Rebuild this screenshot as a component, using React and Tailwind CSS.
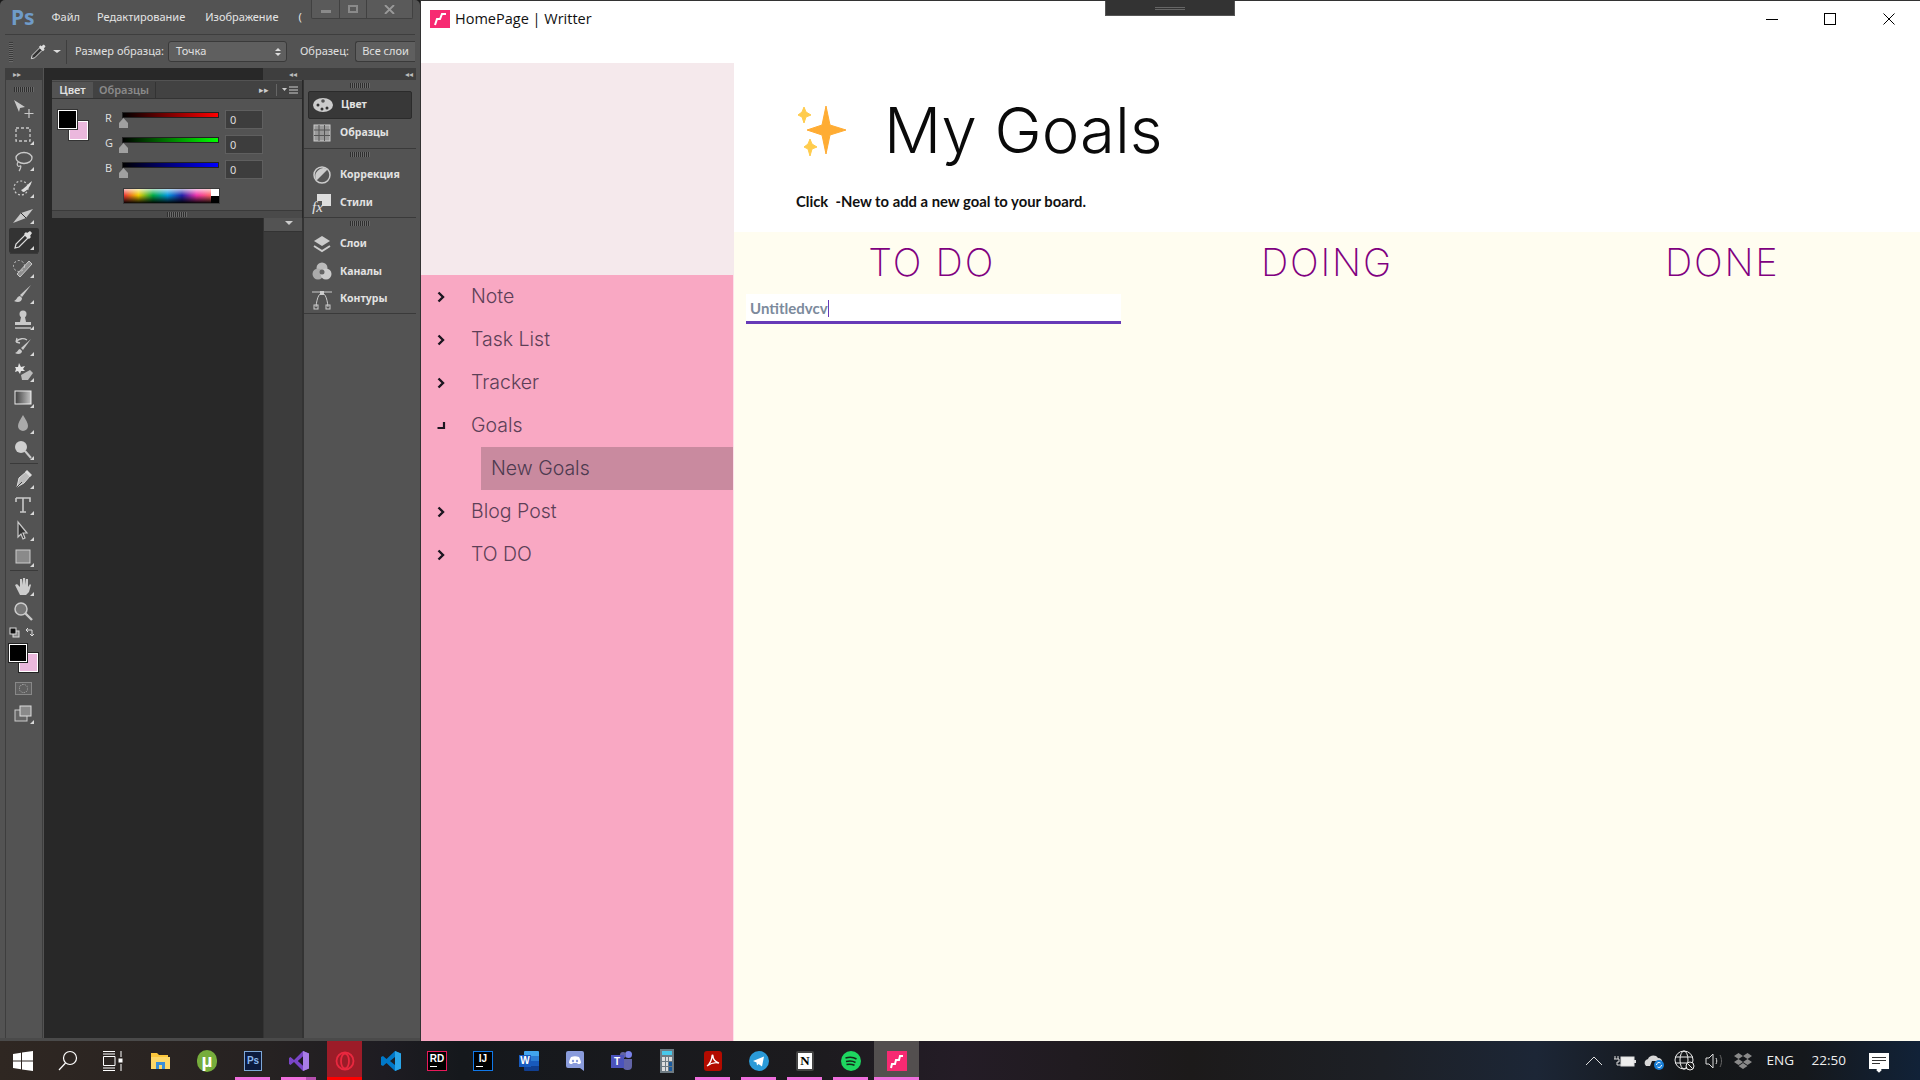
import React from "react";

const G = "#c9c9c9";

function Grip({ w = "w-[20px]" }) {
  return <div className={`${w} h-[5px] bg-[repeating-linear-gradient(to_right,#2e2e2e_0_1px,#6a6a6a_1px_2px)]`} />;
}

function Corner() {
  return <span className="absolute right-[8px] bottom-[3px] w-0 h-0 border-l-[4px] border-l-transparent border-b-[4px] border-b-[#d8d8d8]" />;
}

function Tool({ h = "h-[26px]", corner = true, children, active }) {
  return (
    <div className={`relative ${h} w-full flex items-center justify-center pr-[2px]`}>
      {active && <div className="absolute left-[3px] right-[3px] top-[1px] bottom-0 bg-[#333] rounded-[2px]" />}
      <svg width="24" height="24" viewBox="0 0 24 24" fill="none" className="relative">{children}</svg>
      {corner && <Corner />}
    </div>
  );
}

const Eyedrop = () => (
  <>
    <path d="M4 20l1-4 9-9 3 3-9 9z" fill="#333" stroke="#ddd" strokeWidth="1.2" />
    <path d="M13 6l2-2 1 1 3-2 2 2-2 3 1 1-2 2z" fill="#ddd" />
  </>
);

function Toolbar() {
  return (
    <div className="w-[38px] ml-[5px] shrink-0 bg-[#535353] border-x border-[#3e3e3e] flex flex-col">
      <div className="h-[12px] bg-[#3e3e3e] flex items-center pl-[7px] text-[8px] leading-none text-[#bbb]">▸▸</div>
      <div className="h-[14px] flex items-center justify-center pt-[4px]"><Grip /></div>
      <div className="h-[1px]" />
      <Tool h="h-[26.4px]" corner={false}>
        <path d="M3 4l11 7-5 1-1 4z" fill={G} /><path d="M18 13v9M13.5 17.5h9" stroke={G} strokeWidth="1.2" />
      </Tool>
      <Tool h="h-[26.4px]"><rect x="5" y="5" width="14" height="13" stroke={G} strokeWidth="1.3" strokeDasharray="3 2" /></Tool>
      <Tool h="h-[26.4px]">
        <ellipse cx="13" cy="9" rx="8" ry="5.5" stroke={G} strokeWidth="1.3" /><path d="M7 13c-2 3 0 5 2 4s0 4-1 5" stroke={G} strokeWidth="1.2" />
      </Tool>
      <Tool h="h-[26.4px]">
        <circle cx="10" cy="13" r="7" stroke={G} strokeWidth="1.2" strokeDasharray="2 2" /><path d="M10 15c3-1 8-7 11-9-1 4-5 11-9 11z" fill="#ddd" />
      </Tool>
      <Tool h="h-[26.4px]"><path d="M2 21l8-10 12-4-7 9z" fill={G} /><path d="M10 11l5 5" stroke="#333" /></Tool>
      <Tool h="h-[26.4px]" active><Eyedrop /></Tool>
      <div className="h-[2px] mx-[4px] border-t border-[#3a3a3a]" />
      <Tool>
        <path d="M6 18L18 5l3 3L9 21z" fill="#8f8f8f" stroke={G} /><circle cx="8" cy="10" r="5.5" stroke={G} strokeDasharray="2 2" />
      </Tool>
      <Tool><path d="M20 3L11 15l-2-2z" fill={G} /><path d="M9 14c-3 0-3 4-6 5 4 2 8 1 8-3z" fill={G} /></Tool>
      <Tool>
        <circle cx="12" cy="6" r="3.5" fill={G} /><path d="M10 9h4l1 5H9z" fill={G} /><rect x="4" y="14" width="16" height="3" fill={G} /><path d="M4 20h16" stroke={G} strokeWidth="1.4" />
      </Tool>
      <Tool>
        <path d="M5 8c3-4 8-4 11-2M5 8l1-4M5 8l4 1" stroke={G} strokeWidth="1.3" /><path d="M20 5L12 16l-2-2z" fill={G} /><path d="M9 15c-2 0-2 3-5 4 3 2 7 1 7-2z" fill={G} />
      </Tool>
      <Tool>
        <path d="M4 7l3 0 1-4 2 4 4-1-2 3 2 2-4 0-1 3-2-3-3 1 1-3z" fill="#e4e4e4" /><path d="M10 15l9-5 3 3-5 7h-6z" fill="#bbb" />
      </Tool>
      <Tool>
        <defs><linearGradient id="gradtool"><stop offset="0" stopColor="#3e3e3e" /><stop offset="1" stopColor="#c4c4c4" /></linearGradient></defs>
        <rect x="4" y="5" width="16" height="13" fill="url(#gradtool)" stroke="#eee" strokeWidth="1" />
      </Tool>
      <Tool><path d="M12 3c3 5 5 8 5 11a5 5 0 01-10 0c0-3 2-6 5-11z" fill="#aaa" /></Tool>
      <Tool><circle cx="10" cy="9" r="6" fill="#cfcfcf" /><path d="M14 13l6 7" stroke={G} strokeWidth="2" /></Tool>
      <div className="h-[3px] mx-[4px] border-t border-[#3a3a3a]" />
      <Tool>
        <path d="M6 20l2-9 7-6 4 4-6 7z" fill="#bbb" stroke="#ddd" /><path d="M14 5l2-2 5 5-2 2z" fill="#ddd" /><path d="M6 20l5-5" stroke="#444" />
      </Tool>
      <Tool><path d="M5 5h14v4M5 5v4M12 5v14M9 19h6" stroke={G} strokeWidth="1.6" /></Tool>
      <Tool><path d="M7 3v15l3-3 2 5 2-1-2-5h4z" fill="#333" stroke={G} strokeWidth="1.2" /></Tool>
      <Tool><rect x="5" y="5" width="14" height="13" fill="#8a8a8a" stroke="#ccc" /></Tool>
      <div className="h-[3px] mx-[4px] border-t border-[#3a3a3a]" />
      <Tool>
        <path d="M7 17L4 11l2-1 3 3V5l2 0 1 6V4h2l1 7V5h2v8l2-3 1 1-2 7-3 3h-6z" fill="#ccc" />
      </Tool>
      <Tool corner={false}><circle cx="10" cy="9" r="6" fill="#777" stroke="#ccc" strokeWidth="1.5" /><path d="M14 13l7 7" stroke={G} strokeWidth="2.4" /></Tool>
      <div className="h-[15px] flex items-center justify-between pl-[3px] pr-[6px]">
        <svg width="11" height="11" viewBox="0 0 11 11"><rect x="4" y="4" width="6" height="6" fill="#888" stroke="#ddd" /><rect x="1" y="1" width="6" height="6" fill="#111" stroke="#ddd" /></svg>
        <svg width="11" height="11" viewBox="0 0 11 11" fill="none"><path d="M1 3h6v6M1 3l2-2M1 3l2 2M7 9l-2-2M7 9l2-2" stroke="#ddd" /></svg>
      </div>
      <div className="relative h-[32px] mt-[4px]">
        <div className="absolute left-[13px] top-[9px] w-[19px] h-[19px] bg-[#ebb8dd] border border-white outline outline-[#222]" />
        <div className="absolute left-[3px] top-0 w-[18px] h-[18px] bg-black border border-white outline outline-[#222]" />
      </div>
      <div className="h-[26px] mt-[-1px] flex items-center justify-center pr-[2px]">
        <div className="w-[17px] h-[13px] border border-[#888] bg-[#5f5f5f] flex items-center justify-center">
          <div className="w-[9px] h-[9px] rounded-full border border-dotted border-[#aaa]" />
        </div>
      </div>
      <Tool>
        <rect x="4" y="8" width="12" height="11" fill="#666" stroke="#ccc" /><rect x="9" y="4" width="11" height="10" fill="#8a8a8a" stroke="#ddd" />
      </Tool>
    </div>
  );
}

function Slider({ label, grad }) {
  return (
    <div className="h-[25px] flex items-start">
      <div className="w-[15px] ml-[53px] text-[11px] leading-none pt-[2px] text-[#ddd]">{label}</div>
      <div className="relative w-[97px] ml-[2px]">
        <div className={`h-[6px] mt-[2px] border border-[#222] ${grad}`} />
        <svg width="11" height="10" viewBox="0 0 11 10" className="absolute left-[-4px] top-[8px]"><path d="M5.5 0L10 5v5H1V5z" fill="#a0a0a0" /></svg>
      </div>
      <div className="w-[38px] h-[19px] ml-[6px] bg-[#3d3d3d] border border-[#5f5f5f] pl-[4px] text-[11px] leading-[18px] text-[#ddd]">0</div>
    </div>
  );
}

function ColorPanel() {
  return (
    <div className="h-[138px] w-[250px] ml-[8px] bg-[#535353] flex flex-col shrink-0">
      <div className="h-[18px] flex items-stretch bg-[#424242] border-b border-[#333] text-[11px] mt-[1px] pt-[1px]">
        <div className="w-[41px] bg-[#535353] text-[#e0e0e0] font-semibold flex items-center justify-center">Цвет</div>
        <div className="w-[63px] border-r border-[#333] text-[#8a8a8a] font-semibold flex items-center justify-center">Образцы</div>
        <div className="flex-1" />
        <div className="flex items-center text-[9px] text-[#ccc] pr-[7px]">▸▸</div>
        <div className="w-px my-[2px] bg-[#666]" />
        <div className="flex items-center pl-[5px] pr-[4px]">
          <svg width="16" height="8" viewBox="0 0 16 8"><path d="M0 2h5L2.5 5z" fill="#ccc" /><path d="M7 1h9M7 4h9M7 7h9" stroke="#ccc" /></svg>
        </div>
      </div>
      <div className="relative flex-1 pt-[11px]">
        <div className="absolute left-[17px] top-[22px] w-[19px] h-[19px] bg-[#ebb8dd] border border-white outline outline-[#333]" />
        <div className="absolute left-[6px] top-[11px] w-[19px] h-[19px] bg-black border border-white outline outline-[#333]" />
        <Slider label="R" grad="bg-[linear-gradient(to_right,#000,#f00)]" />
        <Slider label="G" grad="bg-[linear-gradient(to_right,#000,#0f0)]" />
        <Slider label="B" grad="bg-[linear-gradient(to_right,#000,#00f)]" />
        <div className="ml-[71px] w-[97px] h-[16px] mt-[3px] flex border border-[#3a3a3a]">
          <div className="flex-1 bg-[linear-gradient(to_bottom,rgba(255,255,255,.7),rgba(255,255,255,0)_45%,rgba(0,0,0,.95)),linear-gradient(to_right,#e33,#ec0,#0a4,#09d,#22a,#e3a,#f66)]" />
          <div className="w-[8px] flex flex-col"><div className="flex-1 bg-white" /><div className="flex-1 bg-black" /></div>
        </div>
      </div>
      <div className="h-[8px] bg-[#4a4a4a] border-t border-[#3a3a3a] flex items-center justify-center"><Grip /></div>
    </div>
  );
}

function DockItem({ label, active, children }) {
  return (
    <div className={`h-[28px] mx-[4px] flex items-center gap-[7px] pl-[3px] rounded-[2px] ${active ? "bg-[#383838] border border-[#2b2b2b]" : ""}`}>
      <svg width="22" height="22" viewBox="0 0 22 22" fill="none" className="shrink-0">{children}</svg>
      <span className="text-[10.500px] font-bold text-[#e2e2e2]">{label}</span>
    </div>
  );
}

function Dock() {
  return (
    <div className="w-[113px] shrink-0 flex flex-col">
      <div className="h-[12px] bg-[#3e3e3e] flex items-center justify-end pr-[3px] text-[8px] leading-none text-[#bbb]">◂◂</div>
      <div className="flex-1 bg-[#535353] border-l border-[#333] flex flex-col">
        <div className="h-[69px] border-b border-[#3a3a3a] flex flex-col">
          <div className="h-[11px] flex items-center justify-center"><Grip /></div>
          <DockItem label="Цвет" active>
            <ellipse cx="11" cy="11" rx="10" ry="7" fill="#ccc" /><circle cx="6" cy="11" r="1.5" fill="#333" /><circle cx="10" cy="15" r="1.5" fill="#333" /><circle cx="15" cy="14" r="1.5" fill="#333" /><circle cx="11" cy="7" r="1.8" fill="#555" />
          </DockItem>
          <DockItem label="Образцы">
            <rect x="3" y="3" width="16" height="16" fill="#999" stroke="#ccc" /><path d="M8 3v16M13.500 3v16M3 8h16M3 13.500h16" stroke="#555" />
          </DockItem>
        </div>
        <div className="h-[69px] border-b border-[#3a3a3a] flex flex-col">
          <div className="h-[11px] flex items-center justify-center"><Grip /></div>
          <div className="h-[1px]" />
          <DockItem label="Коррекция">
            <circle cx="11" cy="11" r="8" fill="#555" stroke="#ccc" strokeWidth="1.5" /><path d="M5.500 16.500L16.500 5.500A8 8 0 005.500 16.500z" fill="#ccc" />
          </DockItem>
          <DockItem label="Стили">
            <rect x="6" y="2" width="14" height="12" fill="#ddd" /><rect x="0" y="9" width="11" height="13" fill="#535353" /><text x="1" y="20" fontSize="15" fontStyle="italic" fontFamily="Liberation Serif" fill="#e4e4e4">fx</text>
          </DockItem>
        </div>
        <div className="h-[96px] border-b border-[#3a3a3a] flex flex-col">
          <div className="h-[11px] flex items-center justify-center"><Grip /></div>
          <div className="h-[1px]" />
          <DockItem label="Слои">
            <path d="M11 3l8 5-8 5-8-5z" fill="#ccc" /><path d="M3 13l8 5 8-5" stroke="#ccc" strokeWidth="2" />
          </DockItem>
          <DockItem label="Каналы">
            <circle cx="11" cy="8" r="5.500" fill="#bbb" /><circle cx="7" cy="14" r="5.500" fill="#aaa" /><circle cx="15" cy="14" r="5.500" fill="#ccc" /><circle cx="11" cy="12" r="2.500" fill="#666" />
          </DockItem>
          <DockItem label="Контуры">
            <path d="M5 19C6 8 9 5 11 5s5 3 6 14M1 4h20" stroke="#ccc" /><rect x="3" y="17" width="4" height="4" stroke="#ccc" /><rect x="15" y="17" width="4" height="4" stroke="#ccc" /><rect x="9" y="3" width="4" height="4" fill="#ccc" />
          </DockItem>
        </div>
      </div>
    </div>
  );
}

function Photoshop() {
  return (
    <div className="w-[420px] h-full shrink-0 bg-[#535353] flex flex-col font-['Noto_Sans','Open_Sans',sans-serif] rounded-t-[5px]">
      <div className="h-[34px] flex items-center shrink-0 relative text-[11px] text-[#e4e4e4]">
        <span className="ml-[11px] mr-[17px] text-[21px] font-bold text-[#6f9bc8] leading-none">Ps</span>
        <span className="mr-[17px]">Файл</span>
        <span className="mr-[20px]">Редактирование</span>
        <span className="mr-[20px]">Изображение</span>
        <span>(</span>
        <div className="absolute left-[311px] top-0 h-[19px] w-[102px] flex border border-t-0 border-[#414141] rounded-b-[2px] bg-[#5a5a5a]">
          <div className="w-[28px] flex items-center justify-center border-r border-[#414141]"><div className="w-[10px] h-[3px] mt-[5px] bg-[#8a8a8a]" /></div>
          <div className="w-[27px] flex items-center justify-center border-r border-[#414141]"><div className="w-[10px] h-[8px] border-2 border-[#8a8a8a]" /></div>
          <div className="flex-1 flex items-center justify-center">
            <svg width="11" height="9" viewBox="0 0 11 9"><path d="M1 0l9 9M10 0L1 9" stroke="#9a9a9a" strokeWidth="1.8" /></svg>
          </div>
        </div>
      </div>
      <div className="h-[34px] mx-[5px] mr-[5px] shrink-0 border-t border-[#3e3e3e] flex items-center text-[11px] text-[#e0e0e0]">
        <div className="w-[4px] ml-[4px] h-[20px] bg-[repeating-linear-gradient(to_bottom,#3a3a3a_0_1px,#6a6a6a_1px_2px)]" />
        <svg width="20" height="20" viewBox="0 0 24 24" fill="none" className="ml-[15px]"><Eyedrop /></svg>
        <span className="ml-[5px] w-0 h-0 border-x-[4px] border-x-transparent border-t-[3px] border-t-[#ddd]" />
        <div className="ml-[5px] h-[24px] w-px bg-[#3e3e3e]" />
        <span className="ml-[8px] w-[85px] whitespace-nowrap">Размер образца:</span>
        <div className="ml-[8px] w-[119px] h-[21px] bg-[#5f5f5f] border border-[#3a3a3a] rounded-[3px] flex items-center justify-between pl-[7px] pr-[5px]">
          <span>Точка</span>
          <span className="flex flex-col gap-[2px]">
            <span className="w-0 h-0 border-x-[3px] border-x-transparent border-b-[3px] border-b-[#ddd]" />
            <span className="w-0 h-0 border-x-[3px] border-x-transparent border-t-[3px] border-t-[#ddd]" />
          </span>
        </div>
        <span className="ml-[13px] w-[47px] whitespace-nowrap">Образец:</span>
        <div className="ml-[8px] w-[60px] h-[21px] bg-[#5f5f5f] border border-[#3a3a3a] border-r-0 rounded-l-[3px] flex items-center justify-center whitespace-nowrap">Все слои</div>
      </div>
      <div className="flex-1 flex min-h-0 border-b-[3px] border-[#4a4a4a]">
        <Toolbar />
        <div className="w-[259px] ml-[1px] shrink-0 bg-[#282828] flex flex-col">
          <div className="h-[12px] shrink-0 flex bg-[#282828]">
            <div className="flex-1" />
            <div className="w-[40px] bg-[#3e3e3e] flex items-center justify-end pr-[6px] text-[8px] leading-none text-[#bbb]">◂◂</div>
          </div>
          <ColorPanel />
          <div className="flex-1 flex">
            <div className="flex-1" />
            <div className="w-[40px] bg-[#3c3c3c] border-x border-[#333]">
              <div className="h-[14px] bg-[#535353] border-b border-[#333] flex justify-end pr-[9px] pt-[3px]">
                <span className="w-0 h-0 border-x-[4px] border-x-transparent border-t-[4px] border-t-[#ccc]" />
              </div>
            </div>
          </div>
        </div>
        <Dock />
      </div>
    </div>
  );
}

const Chev = () => (
  <svg width="10" height="12" viewBox="0 0 10 12" fill="none"><path d="M2.500 1.500L7 6l-4.500 4.500" stroke="#1c1620" strokeWidth="2.400" /></svg>
);
const Open = () => (
  <svg width="10" height="12" viewBox="0 0 10 12" fill="none"><path d="M8 2v6H1.500" stroke="#1c1620" strokeWidth="2.200" /></svg>
);

function NavItem({ label, open }) {
  return (
    <div className="h-[43px] flex items-center">
      <div className="w-[50px] pl-[15px] flex items-center">{open ? <Open /> : <Chev />}</div>
      <span className="pt-[1px]">{label}</span>
    </div>
  );
}

function Sidebar() {
  return (
    <div className="w-[313px] shrink-0 flex flex-col font-['Inter',sans-serif] font-light text-[19.500px] text-[#5d3f57]">
      <div className="h-[212px] shrink-0 bg-[#f5e9ec]" />
      <div className="flex-1 bg-[#f9a8c3] border-r border-[#fde0ea]">
        <NavItem label="Note" />
        <NavItem label="Task List" />
        <NavItem label="Tracker" />
        <NavItem label="Goals" open />
        <div className="h-[43px] ml-[60px] bg-[#c98a9f] flex items-center pl-[10px] pt-[1px] text-[#4d3a50]">New Goals</div>
        <NavItem label="Blog Post" />
        <NavItem label="TO DO" />
      </div>
    </div>
  );
}

function Sparkles() {
  return (
    <svg width="56" height="56" viewBox="0 0 56 56" className="shrink-0">
      <path d="M31 4L35 23L51 28L35 33L31 52L27 33L12 28L27 23z" fill="#ffac33" stroke="#ffac33" strokeLinejoin="round" />
      <path d="M9 5L11 10L16 13L11 15L9 21L7 15L3 13L7 10z" fill="#ffcc4d" stroke="#ffcc4d" strokeLinejoin="round" />
      <path d="M15 37L17 42L22 45L17 47L15 54L13 47L9 45L13 42z" fill="#ffcc4d" stroke="#ffcc4d" strokeLinejoin="round" />
    </svg>
  );
}

function Column({ title, children }) {
  return (
    <div className="flex flex-col">
      <div className="h-[62px] pb-[2px] flex items-center justify-center font-['Inter',sans-serif] font-extralight text-[38px] tracking-[1.800px] text-[#800080]">{title}</div>
      {children}
    </div>
  );
}

function Main() {
  return (
    <div className="flex-1 flex flex-col min-w-0">
      <div className="h-[169px] shrink-0 bg-white pl-[61px] flex flex-col">
        <div className="flex items-center h-[110px] mt-[12px]">
          <Sparkles />
          <h1 className="ml-[33px] font-['Inter',sans-serif] font-light text-[63.500px] leading-none text-[#0a0a0a]">My Goals</h1>
        </div>
        <p className="mt-[5px] ml-[1px] font-['Lato',sans-serif] font-bold text-[14.800px] text-[#111]">Click&nbsp; -New to add a new goal to your board.</p>
      </div>
      <div className="flex-1 bg-[#fffdf0] grid grid-cols-3">
        <Column title="TO DO">
          <div className="ml-[12px] mr-[8px] h-[30px] bg-white border-b-[3px] border-[#673ab7] flex items-center pl-[4px] pt-[2px] font-['Lato',sans-serif] font-bold text-[15px] text-[#7c8a9c]">
            Untitledvcv<span className="w-px h-[17px] bg-[#673ab7]" />
          </div>
        </Column>
        <Column title="DOING" />
        <Column title="DONE" />
      </div>
    </div>
  );
}

function Writer() {
  return (
    <div className="flex-1 min-w-0 h-full bg-white border-t border-l border-[#333] flex flex-col relative">
      <div className="absolute left-[684px] top-0 w-[130px] h-[15px] bg-[#333] border-x border-b border-[#555] flex items-center justify-center">
        <div className="w-[30px] h-[3px] border-y border-[#666]" />
      </div>
      <div className="h-[62px] shrink-0 flex items-start pl-[9px] pt-[8px]">
        <div className="w-[20px] h-[18px] mt-[1px] bg-[#f72a72] flex items-center justify-center shrink-0">
          <svg width="14" height="14" viewBox="0 0 14 14" fill="none"><path d="M2 13l2-6h3l2-5h4" stroke="#fff" strokeWidth="2" /></svg>
        </div>
        <span className="ml-[5px] font-['Open_Sans',sans-serif] text-[14.500px] leading-[20px] text-[#111]">HomePage | Writter</span>
        <div className="flex-1" />
        <div className="flex items-center h-[20px]">
          <div className="w-[12px] h-px bg-black mr-[46px]" />
          <div className="w-[12px] h-[12px] border border-black mr-[47px]" />
          <svg width="12" height="12" viewBox="0 0 12 12" className="mr-[25px]"><path d="M0.500 0.500l11 11M11.500 0.500l-11 11" stroke="#000" /></svg>
        </div>
      </div>
      <div className="flex-1 flex min-h-0">
        <Sidebar />
        <Main />
      </div>
    </div>
  );
}

function TB({ children, pink, two, bg = "", bar = "" }) {
  return (
    <div className={`relative w-[46px] h-full flex items-center justify-center shrink-0`}>
      {bg && <div className={`absolute inset-y-0 ${bg === "bg-[#534f4f]" ? "left-0 right-[1px]" : "left-[5px] right-[6px]"} ${bg}`} />}
      <div className="relative flex items-center justify-center">{children}</div>
      {pink && <div className={`absolute bottom-0 h-[3px] ${bg === "bg-[#534f4f]" ? "left-0 right-[1px]" : "left-[5px] right-[6px]"} ${bar || "bg-[#ee6fdc]"} ${two ? "border-r-[10px] border-[#b44fae]" : ""}`} />}
    </div>
  );
}

function Taskbar() {
  return (
    <div className="h-[39px] shrink-0 flex items-center text-white bg-[linear-gradient(to_right,#2f2722,#262222_14%,#1e1c22_20%,#15181c_24%,#1c1b1e_42%,#241c26_50%,#1c1a1a_62%,#1d2026_72%,#1c2636_80%,#141618_88%,#15181c_94%,#112238)]">
      <div className="w-[45px] h-full flex items-center justify-center shrink-0">
        <svg width="20" height="20" viewBox="0 0 20 20" fill="#fff"><path d="M0 3l8-1.200V9.500H0zM9 1.600L20 0v9.500H9zM0 10.500h8v7.700L0 17zM9 10.500h11V20l-11-1.600z" /></svg>
      </div>
      <div className="w-[45px] h-full flex items-center justify-center shrink-0">
        <svg width="20" height="24" viewBox="0 0 20 24" fill="none" stroke="#fff" strokeWidth="1.200"><circle cx="12" cy="9" r="6.500" /><path d="M7.500 14L1 21" /></svg>
      </div>
      <div className="w-[45px] h-full flex items-center justify-center shrink-0">
        <svg width="20" height="20" viewBox="0 0 20 20" fill="none" stroke="#fff"><path d="M0 .5h12M0 19.500h12M0 17h12M.5 5.500h11.500v9H.5zM0 3h12M18 0v6M18 13v7" /><rect x="16" y="8" width="3" height="3" fill="#fff" /></svg>
      </div>
      <div className="w-[3px] shrink-0" />
      <TB>
        <svg width="19" height="20" viewBox="0 0 19 20" className="ml-[-2px]"><path d="M0 2h6l2 2h9v14H0z" fill="#fcc73c" /><path d="M0 6h19v12H0z" fill="#fdd868" /><path d="M5 18v-7h9v7h-3v-4H8v4z" fill="#3a8fd8" /></svg>
      </TB>
      <TB>
        <div className="w-[20px] h-[22px] rounded-[10px] bg-[#76ad3c] flex items-center justify-center font-['Liberation_Sans',sans-serif] font-bold text-[19px] text-white leading-none">µ</div>
      </TB>
      <TB pink>
        <div className="w-[18px] h-[20px] bg-[#0c1b3e] border border-[#7ea8d8] flex items-center justify-center font-['Liberation_Sans',sans-serif] font-bold text-[10px] text-[#8ab8ee]">Ps</div>
      </TB>
      <TB pink two>
        <svg width="20" height="20" viewBox="0 0 20 20"><path d="M14 0l6 2.500v15L14 20 5 11 1.500 14 0 13V7l1.500-1L5 9z" fill="#7a45c8" /><path d="M14 5.500L9 10l5 4.500z" fill="#241b33" /><path d="M14 0l6 2.500v15L14 20z" fill="#a97de8" /><path d="M14 5.500L9 10l5 4.500z" fill="#1e1a24" /></svg>
      </TB>
      <TB pink bg="bg-[#9c1c28]" bar="bg-[#ff0000]">
        <svg width="20" height="20" viewBox="0 0 20 20" fill="none"><circle cx="10" cy="10" r="8.500" stroke="#e9283f" strokeWidth="1.800" /><ellipse cx="10" cy="10" rx="4" ry="7.500" stroke="#e9283f" strokeWidth="1.800" /></svg>
      </TB>
      <TB>
        <svg width="20" height="20" viewBox="0 0 20 20"><path d="M14 0l6 2.500v15L14 20 5.500 12 2 15l-2-1V6l2-1 3.500 3z" fill="#0078c8" /><path d="M14 0l6 2.500v15L14 20z" fill="#2aa5e8" /><path d="M14 6l-5 4 5 4z" fill="#1b2026" /></svg>
      </TB>
      <TB>
        <div className="w-[20px] h-[20px] bg-black border border-[#e8195a] flex flex-col items-center justify-center font-['Liberation_Sans',sans-serif] font-bold text-[10px] leading-none text-white">RD<span className="w-[7px] h-px bg-white mt-[2px] self-start ml-[2px]" /></div>
      </TB>
      <TB>
        <div className="w-[20px] h-[20px] bg-black border border-[#1078e8] flex flex-col items-center justify-center font-['Liberation_Sans',sans-serif] font-bold text-[10px] leading-none text-white">IJ<span className="w-[7px] h-px bg-white mt-[2px] self-start ml-[2px]" /></div>
      </TB>
      <TB>
        <div className="relative w-[20px] h-[20px]">
          <div className="absolute right-0 top-0 w-[15px] h-[20px] bg-[linear-gradient(to_bottom,#41a5ee_25%,#2b7cd3_25%_50%,#185abd_50%_75%,#103f91_75%)] rounded-[1px]" />
          <div className="absolute left-0 top-[4px] w-[12px] h-[12px] bg-[#185abd] flex items-center justify-center font-['Liberation_Sans',sans-serif] font-bold text-[10px] text-white">W</div>
        </div>
      </TB>
      <TB>
        <svg width="18" height="20" viewBox="0 0 18 20"><path d="M2 0h14a2 2 0 012 2v18l-4-3H2a2 2 0 01-2-2V2a2 2 0 012-2z" fill="#8a9cdc" /><path d="M5 6c3-1 5-1 8 0 1 2 2 4 2 6-1 1-2 1-3 1l-1-1H7l-1 1c-1 0-2 0-3-1 0-2 1-4 2-6z" fill="#fff" /><circle cx="7" cy="10" r="1.200" fill="#8a9cdc" /><circle cx="11" cy="10" r="1.200" fill="#8a9cdc" /></svg>
      </TB>
      <TB>
        <div className="relative w-[21px] h-[20px]">
          <div className="absolute right-0 top-0 w-[7px] h-[7px] rounded-full bg-[#7b83eb]" />
          <div className="absolute right-[6px] top-[1px] w-[6px] h-[6px] rounded-full bg-[#6264a7]" />
          <div className="absolute right-0 top-[8px] w-[9px] h-[11px] bg-[#6264a7] rounded-b-[4px]" />
          <div className="absolute left-0 top-[4px] w-[13px] h-[13px] bg-[#4b53bc] flex items-center justify-center font-['Liberation_Sans',sans-serif] font-bold text-[10px] text-white">T</div>
        </div>
      </TB>
      <TB>
        <div className="w-[14px] h-[24px] bg-[#6d7a82] p-[2px] flex flex-col gap-[2px]">
          <div className="h-[4px] bg-[#48c8ea]" />
          <div className="flex-1 grid grid-cols-3 gap-px">
            <span className="bg-[#ddd]" /><span className="bg-[#ddd]" /><span className="bg-[#ddd]" />
            <span className="bg-[#ddd]" /><span className="bg-[#ddd]" /><span className="bg-[#1a5a9e]" />
            <span className="bg-[#ddd]" /><span className="bg-[#ddd]" /><span className="bg-[#1a5a9e]" />
          </div>
        </div>
      </TB>
      <TB pink>
        <div className="w-[18px] h-[20px] rounded-[3px] bg-[#b30b00] flex items-center justify-center">
          <svg width="14" height="14" viewBox="0 0 14 14" fill="none" stroke="#fff" strokeWidth="1.300"><path d="M1 12c3-2 5-7 5-10 0-1 1-1 1 0 0 4 3 6 6 7-4-1-8 0-12 3z" /></svg>
        </div>
      </TB>
      <TB pink>
        <svg width="20" height="20" viewBox="0 0 20 20"><circle cx="10" cy="10" r="10" fill="#2a9ad8" /><path d="M4 10l11-4.500-2 10-3.500-2.500-1.500 1.500-.5-3z" fill="#fff" /></svg>
      </TB>
      <TB pink>
        <div className="w-[18px] h-[20px] bg-white border-2 border-[#444] rounded-[2px] flex items-center justify-center font-['Liberation_Serif',serif] font-bold text-[13px] leading-none text-black">N</div>
      </TB>
      <TB pink>
        <svg width="20" height="20" viewBox="0 0 20 20" fill="none"><circle cx="10" cy="10" r="10" fill="#1ed760" /><path d="M4.500 7c4-1 8-.8 11 1M5 10.500c3.500-.8 7-.6 9.500 1M5.500 13.500c3-.6 5.500-.4 8 .8" stroke="#14281a" strokeWidth="1.500" /></svg>
      </TB>
      <TB pink bg="bg-[#534f4f]">
        <div className="w-[20px] h-[20px] bg-[#f72a72] flex items-center justify-center">
          <svg width="16" height="16" viewBox="0 0 16 16" fill="none"><path d="M2 15l1-4h3l1-4h3l1-4h3" stroke="#fff" strokeWidth="2" /></svg>
        </div>
      </TB>
      <div className="flex-1" />
      <div className="flex items-center h-full pr-[31px]">
        <svg width="18" height="10" viewBox="0 0 18 10" fill="none" stroke="#ddd"><path d="M1 9l8-8 8 8" /></svg>
        <svg width="22" height="14" viewBox="0 0 22 14" fill="none" className="ml-[11px]"><path d="M1 2v3M4 2v3M0 5h5v3H3v3h4" stroke="#ddd" /><rect x="7" y="3" width="13" height="9" fill="#eee" stroke="#ddd" /><rect x="20" y="6" width="2" height="3" fill="#ddd" /></svg>
        <svg width="22" height="18" viewBox="0 0 22 18" className="ml-[8px]"><path d="M2 14a4 4 0 012-7c1-4 8-5 10-1 3 0 4 2 4 3H8l-2 5z" fill="#d8d8d8" /><circle cx="15" cy="13" r="5" fill="#1a80d8" /><path d="M12.500 13a2.500 2.500 0 014-2M17.500 13a2.500 2.500 0 01-4 2" stroke="#fff" fill="none" /></svg>
        <svg width="22" height="22" viewBox="0 0 22 22" fill="none" stroke="#eee" className="ml-[8px]"><circle cx="10" cy="10" r="9" /><ellipse cx="10" cy="10" rx="4" ry="9" /><path d="M1 7h18M1 13h18" /><circle cx="16" cy="16" r="4" fill="#1b1b1b" /><path d="M13.500 13.500l5 5" /></svg>
        <svg width="18" height="16" viewBox="0 0 18 16" fill="none" stroke="#ddd" className="ml-[9px]"><path d="M1 5h3l4-4v14l-4-4H1zM11 5c1 2 1 4 0 6" /><path d="M15 2c2 4 2 8 0 12" stroke="#666" /></svg>
        <svg width="18" height="16" viewBox="0 0 18 16" fill="#8a8a8a" className="ml-[11px]"><path d="M4.500 0L9 3 4.500 6 0 3zM13.500 0L18 3l-4.500 3L9 3zM4.500 6L9 9l-4.500 3L0 9zM13.500 6L18 9l-4.500 3L9 9zM4.500 13L9 10l4.500 3L9 16z" /></svg>
        <span className="ml-[15px] font-['Open_Sans',sans-serif] text-[13.500px] text-[#eee] w-[30px] whitespace-nowrap">ENG</span>
        <span className="ml-[15px] font-['Open_Sans',sans-serif] text-[13.500px] text-[#eee] whitespace-nowrap">22:50</span>
        <div className="relative ml-[23px] w-[20px] h-[16px] bg-white flex flex-col justify-center gap-[2px] px-[3px]">
          <span className="h-px bg-[#333]" /><span className="h-px bg-[#333]" /><span className="h-px w-[8px] bg-[#333]" />
          <span className="absolute left-[8px] bottom-[-3px] w-[4px] h-[4px] bg-white rotate-45" />
        </div>
      </div>
    </div>
  );
}

export default function App() {
  return (
    <div className="w-[1920px] h-[1080px] overflow-hidden flex flex-col bg-[#1a1a1a]">
      <div className="h-[1041px] flex shrink-0">
        <Photoshop />
        <Writer />
      </div>
      <Taskbar />
    </div>
  );
}
